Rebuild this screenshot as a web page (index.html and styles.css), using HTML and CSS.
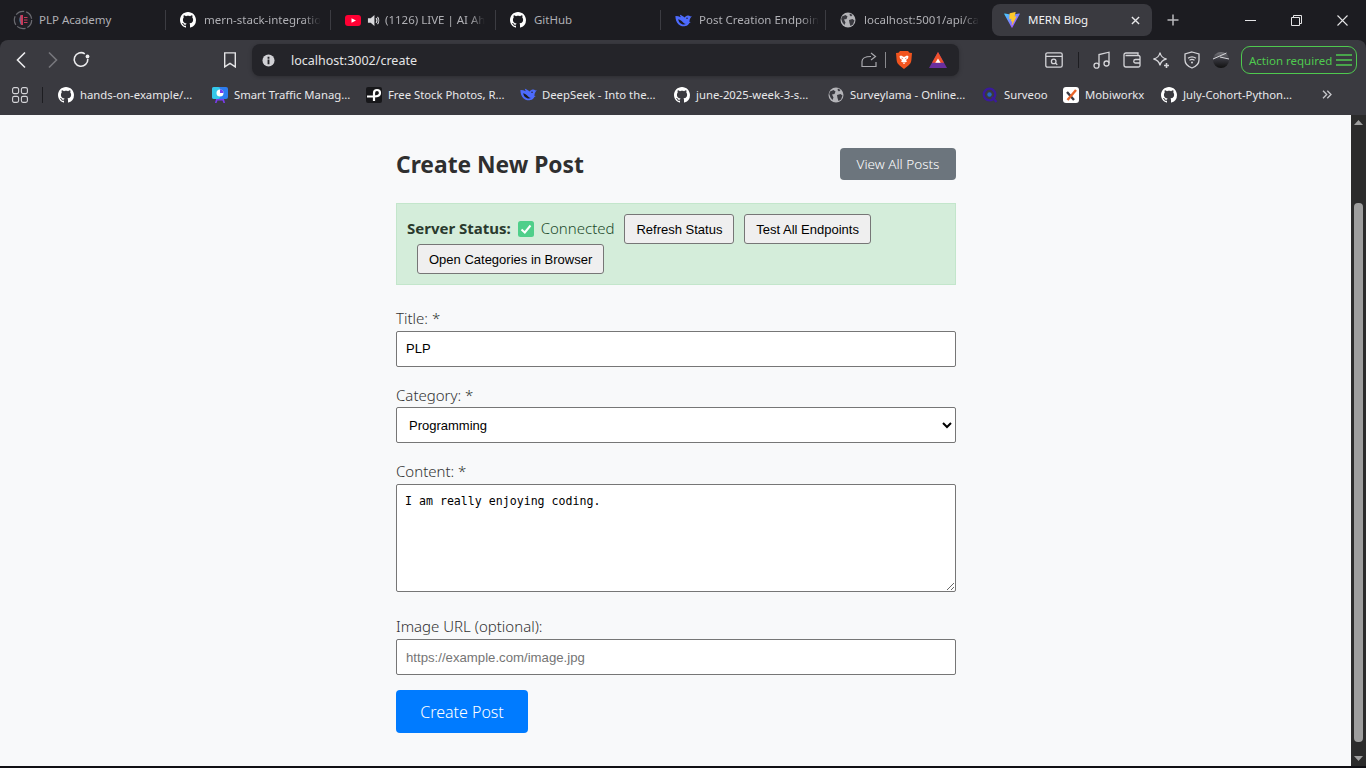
FILE: index.html
```html
<!DOCTYPE html>
<html lang="en">
<head>
<meta charset="utf-8">
<title>MERN Blog</title>
<link rel="stylesheet" href="styles.css">
</head>
<body>
<svg class="defs" width="0" height="0" aria-hidden="true">
  <defs>
    <symbol id="gh" viewBox="0 0 16 16"><path fill="currentColor" d="M8 0C3.58 0 0 3.58 0 8c0 3.54 2.29 6.53 5.47 7.59.4.07.55-.17.55-.38 0-.19-.01-.82-.01-1.49-2.01.37-2.53-.49-2.69-.94-.09-.23-.48-.94-.82-1.13-.28-.15-.68-.52-.01-.53.63-.01 1.08.58 1.23.82.72 1.21 1.87.87 2.33.66.07-.52.28-.87.51-1.07-1.78-.2-3.64-.89-3.64-3.95 0-.87.31-1.59.82-2.15-.08-.2-.36-1.02.08-2.12 0 0 .67-.21 2.2.82.64-.18 1.32-.27 2-.27s1.36.09 2 .27c1.53-1.04 2.2-.82 2.2-.82.44 1.1.16 1.92.08 2.12.51.56.82 1.27.82 2.15 0 3.07-1.87 3.75-3.65 3.95.29.25.54.73.54 1.48 0 1.07-.01 1.93-.01 2.2 0 .21.15.46.55.38A8.01 8.01 0 0 0 16 8c0-4.42-3.58-8-8-8z"/></symbol>
    <symbol id="globe" viewBox="0 0 16 16"><circle cx="8" cy="8" r="7.500" fill="#b4b4b8"/><path fill="#3a3a40" d="M2 4.500 5.500 3 7.500 4.500 6.500 7 4 7.500 5.500 10.500 4.500 13 2.500 10.500 1.200 7zM9 8l3.500-1 2 1.500-1.500 4L10.500 14 9.500 11zM10 1.500 12.500 3 11 4.500 9.500 3z"/></symbol>
    <symbol id="whale" viewBox="0 0 18 14"><path fill="#4d6bfe" d="M17.700 2.200c-.4-.5-.9.200-1.300.5-.8-.8-1.800-1.100-2.800-1-1.500.1-2.700 1-3.300 2.200C9.400 3 8.200 2.400 7.400 1.900 6.600 1.400 5.800 1 5 .9c.4.900.7 1.800 1 2.600C4.200 2.500 2.200 2 .3 2.100c0 3.300.9 6.600 3.200 8.900 1.700 1.800 4.700 2.700 7.600 2 2-.4 3.500-1.700 4.200-3.300.7-.2 1.300-.6 1.600-1.300-.8.300-1.300.2-1.500 0 .1-1.500.2-2.800 1.300-4.400.2-.3.7-.7 1-1.800z"/><path fill="#1c1c21" d="M3.300 5.700c2 .4 4.200 2.200 5.300 3.500 1 1.300 2.400 1.800 3.500 1.400-2 1.500-5.300.8-6.800-.8-1.100-1.200-1.800-2.800-2-4.100z"/><circle cx="12.800" cy="4.700" r=".8" fill="#1c1c21"/></symbol>
  </defs>
</svg>

<header class="browser">
  <div class="tabstrip">
    <div class="tab tab-first">
      <svg class="fav fav-plp" viewBox="0 0 20 20"><circle cx="10" cy="10" r="8.700" fill="#1f1f26" stroke="#6a6a70" stroke-width="1.200" stroke-dasharray="9 2"/><path fill="#c93a5a" d="M7.500 5h2.500v10H8C6.500 12 6 8 7.500 5z"/><path fill="#2a8fa8" d="M8 5c-1 3-1 7 .5 10L7 13C6 10 6.500 7 8 5z"/><path stroke="#c93a5a" stroke-width="1" d="M11 7.500h3.500M11 10h3.500M11 12.500h3.500"/></svg>
      <span class="tab-label">PLP Academy</span>
    </div>
    <div class="tab">
      <svg class="fav"><use href="#gh"/></svg>
      <span class="tab-label tab-fade">mern-stack-integratio</span>
    </div>
    <div class="tab">
      <svg class="fav-yt" viewBox="0 0 16 11"><rect width="16" height="11" rx="3" fill="#ff0033"/><path fill="#fff" d="M6.500 3.200 11 5.500 6.500 7.800z"/></svg>
      <svg class="fav-sound" viewBox="0 0 14 14"><path fill="#d8d8dc" d="M1 4.500h3L8 1v12L4 9.500H1z"/><path fill="none" stroke="#d8d8dc" stroke-width="1.200" d="M9.800 4.500c1 1.300 1 3.700 0 5M11.300 3c1.800 2.200 1.800 5.800 0 8"/></svg>
      <span class="tab-label tab-fade">(1126) LIVE | AI Ah</span>
    </div>
    <div class="tab">
      <svg class="fav"><use href="#gh"/></svg>
      <span class="tab-label">GitHub</span>
    </div>
    <div class="tab">
      <svg class="fav-whale"><use href="#whale"/></svg>
      <span class="tab-label tab-fade">Post Creation Endpoin</span>
    </div>
    <div class="tab tab-last">
      <svg class="fav fav-globe"><use href="#globe"/></svg>
      <span class="tab-label tab-fade">localhost:5001/api/ca</span>
    </div>
    <div class="tab-active">
      <svg class="fav" viewBox="0 0 16 16"><defs><linearGradient id="vl" x1="0" y1="0" x2="1" y2="1"><stop offset="0" stop-color="#41d1ff"/><stop offset="1" stop-color="#bd34fe"/></linearGradient></defs><path fill="url(#vl)" d="M15.800 2 8.400 15.400c-.2.300-.6.300-.8 0L.2 2c-.2-.3.100-.7.500-.6L8 2.700l7.300-1.300c.4-.1.700.3.500.6z"/><path fill="#ffc82a" d="M11.300.1 5.800 1.200c-.1 0-.2.100-.2.200L5.300 7c0 .1.100.2.300.2l1.500-.4c.2 0 .3.100.3.300l-.5 2.200c0 .200.100.300.300.200l.9-.3c.200 0 .300.100.300.300l-.7 3.400c0 .200.300.300.400.100l.1-.100 4.400-8.400c.1-.2 0-.3-.2-.3l-1.500.3c-.2 0-.3-.1-.3-.3L11.600.4c.1-.2-.1-.3-.3-.3z"/></svg>
      <span class="active-label">MERN Blog</span>
      <svg class="tab-x" viewBox="0 0 10 10"><path stroke="#e8e8ea" stroke-width="1.500" d="M1 1l8 8M9 1 1 9"/></svg>
    </div>
    <svg class="new-tab" viewBox="0 0 12 12"><path stroke="#b9b9bd" stroke-width="1.500" d="M6 .5v11M.5 6h11"/></svg>
    <div class="win-controls">
      <svg class="win-min" viewBox="0 0 11 11"><path stroke="#e4e4e6" d="M0 5.500h11"/></svg>
      <svg class="win-max" viewBox="0 0 11 11"><path fill="none" stroke="#e4e4e6" d="M.5 2.500h8v8h-8zM2.500 2.500V.5h8v8h-2"/></svg>
      <svg class="win-close" viewBox="0 0 11 11"><path stroke="#e4e4e6" stroke-width="1.100" d="M.5.500l10 10M10.500.500l-10 10"/></svg>
    </div>
  </div>

  <div class="toolbar">
    <div class="nav-group">
      <svg class="tb-ico" viewBox="0 0 20 20"><path fill="none" stroke="#ececee" stroke-width="1.600" d="M13 2.500 5.500 10l7.500 7.500"/></svg>
      <svg class="tb-ico" viewBox="0 0 20 20"><path fill="none" stroke="#77777c" stroke-width="1.600" d="M7 2.500 14.500 10 7 17.500"/></svg>
      <svg class="tb-ico" viewBox="0 0 20 20"><path fill="none" stroke="#ececee" stroke-width="1.600" d="M15.800 9a6.800 6.800 0 1 1-3-5.200"/><circle cx="15.500" cy="6.500" r="1.900" fill="#ececee"/></svg>
    </div>
    <svg class="bookmark" viewBox="0 0 14 16"><path fill="none" stroke="#e4e4e6" stroke-width="1.400" d="M1.700.9h10.600v14L7 11.300l-5.300 3.600z"/></svg>
    <div class="omnibox">
      <svg class="info" viewBox="0 0 14 14"><circle cx="7" cy="7" r="6.500" fill="#d0d0d4"/><path fill="#242429" d="M6 6h2v5H6zM6 3h2v2H6z"/></svg>
      <span class="url">localhost:3002/create</span>
      <svg class="share" viewBox="0 0 16 16"><path fill="none" stroke="#a9a9ae" stroke-width="1.200" d="M15 10v4.500H1v-5c0-3 3-5 9-5M10 1l4.500 3.500L10 8"/></svg>
      <span class="omni-sep"></span>
      <svg class="shield" viewBox="0 0 16 18"><path fill="#f1541e" d="M4 0h8l1.500 1.700L16 2l-.6 7c-.3 2.500-1.200 4-3 5.500L8 18l-4.400-3.500C1.800 13 .9 11.500.6 9L0 2l2.500-.3z"/><path fill="#fff" d="M8 6 5 4.500l-1.500.8.500 2.200 2 1.500-1 1.500 2 1 .5 1.500h1l.5-1.500 2-1-1-1.500 2-1.500.5-2.200-1.500-.8z"/><path fill="#f1541e" d="M5.500 6.500 7 7.500 6 8zM10.500 6.500 9 7.500 10 8zM7 11h2L8 12z"/></svg>
      <svg class="triangle" viewBox="0 0 18 16"><path fill="#6a2f9e" d="M9 0l9 16H0z"/><path fill="#f0512a" d="M9 0l6 10.800H3z"/><path fill="#fff" d="M9 6.500l2.700 4.300H6.300z"/></svg>
    </div>
    <div class="tb-right">
      <svg class="ext-ico" viewBox="0 0 18 16"><path fill="none" stroke="#d4d4d8" stroke-width="1.300" d="M2.500.8h13c1 0 1.700.7 1.700 1.700v11c0 1-.7 1.700-1.700 1.700h-13c-1 0-1.700-.7-1.700-1.700v-11C.8 1.500 1.500.8 2.500.8zM1 4.300h16"/><circle cx="8.700" cy="9.400" r="2.300" fill="none" stroke="#d4d4d8" stroke-width="1.300"/><path stroke="#d4d4d8" stroke-width="1.300" d="M10.300 11l2 1.800"/></svg>
      <span class="tb-sep"></span>
      <svg class="ext-ico ext-music" viewBox="0 0 18 18"><path fill="none" stroke="#d4d4d8" stroke-width="1.300" d="M6 14.500V3.500L16 1.200v11"/><circle cx="3.500" cy="14.700" r="2.500" fill="none" stroke="#d4d4d8" stroke-width="1.300"/><circle cx="13.500" cy="12.500" r="2.500" fill="none" stroke="#d4d4d8" stroke-width="1.300"/></svg>
      <svg class="ext-ico ext-wallet" viewBox="0 0 18 16"><path fill="none" stroke="#d4d4d8" stroke-width="1.300" d="M15 3.500V1H3C1.800 1 1 1.800 1 3v10c0 1.200.8 2 2 2h12.500c.8 0 1.500-.7 1.500-1.500v-8.500c0-.8-.7-1.500-1.500-1.500H2.500M17 7.500h-4.500a1.500 1.500 0 0 0 0 3.500H17"/></svg>
      <svg class="ext-ico ext-star" viewBox="0 0 18 18"><path fill="none" stroke="#d4d4d8" stroke-width="1.300" d="M8 1.500c.7 3.700 2.600 5.600 6.500 6.500-3.900.9-5.800 2.800-6.500 6.500C7.300 10.800 5.400 8.900 1.500 8c3.900-.9 5.800-2.800 6.500-6.500z"/><path stroke="#d4d4d8" stroke-width="1.600" d="M14.500 12v5M12 14.500h5"/></svg>
      <svg class="ext-ico ext-shield" viewBox="0 0 16 18"><path fill="none" stroke="#d4d4d8" stroke-width="1.300" d="M8 1l7 2v6c0 4-3 6.500-7 8-4-1.500-7-4-7-8V3z"/><path fill="none" stroke="#d4d4d8" stroke-width="1.200" d="M4 7.300c2.400-1.700 5.600-1.700 8 0M5.500 9.300c1.500-1 3.500-1 5 0"/><circle cx="8" cy="11.400" r="1" fill="#d4d4d8"/></svg>
      <svg class="ext-ico ext-ball" viewBox="0 0 18 18"><defs><linearGradient id="bl" x1="0" y1="0" x2="0" y2="1"><stop offset="0" stop-color="#77777c"/><stop offset=".5" stop-color="#33333a"/><stop offset="1" stop-color="#111"/></linearGradient></defs><circle cx="9" cy="9" r="8" fill="url(#bl)"/><path stroke="#d8d8dc" stroke-width="1" d="M1 8 14.500 2M8 6l9 2"/></svg>
      <div class="action">
        <span>Action required</span>
        <svg class="action-menu" viewBox="0 0 16 12"><path stroke="#4fc94f" stroke-width="1.600" d="M0 1h16M0 6h16M0 11h16"/></svg>
      </div>
    </div>
  </div>

  <nav class="bookmarks">
    <svg class="apps" viewBox="0 0 16 16"><g fill="none" stroke="#d4d4d8" stroke-width="1.100"><rect x=".6" y=".6" width="6" height="6" rx="1.600"/><rect x="9.400" y=".6" width="6" height="6" rx="1.600"/><rect x=".6" y="9.400" width="6" height="6" rx="1.600"/><rect x="9.400" y="9.400" width="6" height="6" rx="1.600"/></g></svg>
    <span class="bm-sep"></span>
    <a class="bm"><svg class="fav"><use href="#gh"/></svg>hands-on-example/...</a>
    <a class="bm"><svg class="fav" viewBox="0 0 16 16"><rect width="16" height="12" rx="2" fill="#2d7df0"/><rect width="8" height="12" rx="2" fill="#34c8e8"/><circle cx="8" cy="6" r="3.500" fill="#fff"/><path fill="#7a3cf0" d="M8 6V2.500A3.500 3.500 0 0 1 11.500 6zM4 12h8l1 4h-1.500l-1-2.500h-5L4.500 16H3z"/></svg>Smart Traffic Manag...</a>
    <a class="bm"><svg class="fav" viewBox="0 0 16 16"><rect width="16" height="16" rx="2" fill="#17171a"/><path fill="none" stroke="#fff" stroke-width="2.200" d="M1 9.500h7M8 14V6a3 3 0 0 1 6 0c0 2-1.300 3.500-6 3.500"/></svg>Free Stock Photos, R...</a>
    <a class="bm"><svg class="fav-whale"><use href="#whale"/></svg>DeepSeek - Into the...</a>
    <a class="bm"><svg class="fav"><use href="#gh"/></svg>june-2025-week-3-s...</a>
    <a class="bm"><svg class="fav"><use href="#globe"/></svg>Surveylama - Online...</a>
    <a class="bm bm-surveoo"><svg class="fav" viewBox="0 0 16 16"><circle cx="7.500" cy="7.500" r="5.800" fill="none" stroke="#3a1a9c" stroke-width="2.200"/><circle cx="7.500" cy="7.500" r="2.200" fill="#2466c8"/><path stroke="#3a1a9c" stroke-width="2.200" d="M10 10l4.500 5"/></svg>Surveoo</a>
    <a class="bm bm-mobi"><svg class="fav" viewBox="0 0 16 16"><rect width="16" height="16" rx="3" fill="#fff"/><path stroke="#3a3a44" stroke-width="2.400" d="M4 5l7 8"/><path stroke="#e8642a" stroke-width="2.400" d="M13 3 4.500 13"/></svg>Mobiworkx</a>
    <a class="bm bm-july"><svg class="fav"><use href="#gh"/></svg>July-Cohort-Python...</a>
    <svg class="more" viewBox="0 0 10 9"><path fill="none" stroke="#c8c8cc" stroke-width="1.300" d="M1 .7 4.700 4.500 1 8.300M5.300.7 9 4.500 5.300 8.300"/></svg>
  </nav>
</header>

<div class="viewport">
  <main class="page">
    <div class="page-head">
      <h1>Create New Post</h1>
      <a class="btn-secondary">View All Posts</a>
    </div>

    <div class="status">
      <strong>Server Status:</strong>
      <svg class="check" viewBox="0 0 16 16"><rect width="16" height="16" rx="2.500" fill="#4fcf8a"/><path fill="none" stroke="#fff" stroke-width="2" d="M3.500 8.500 6.800 11.500 12.500 4.500"/></svg>
      <span class="status-text">Connected</span>
      <button class="status-btn" type="button">Refresh Status</button>
      <button class="status-btn" type="button">Test All Endpoints</button>
      <button class="status-btn" type="button">Open Categories in Browser</button>
    </div>

    <form class="post-form">
      <div class="field">
        <label for="t">Title: *</label>
        <input id="t" type="text" value="PLP">
      </div>
      <div class="field">
        <label for="c">Category: *</label>
        <select id="c"><option>Programming</option></select>
      </div>
      <div class="field field-content">
        <label for="b">Content: *</label>
        <textarea id="b" rows="6">I am really enjoying coding.</textarea>
      </div>
      <div class="field field-url">
        <label for="u">Image URL (optional):</label>
        <input id="u" type="text" placeholder="https://example.com/image.jpg">
      </div>
      <button class="btn-primary" type="button">Create Post</button>
    </form>
  </main>
  <div class="scrollbar">
    <svg class="sb-arrow" viewBox="0 0 9 6"><path fill="#9e9e9e" d="M4.500 1 9 6H0z"/></svg>
    <div class="sb-track"><div class="sb-thumb"></div></div>
    <svg class="sb-arrow" viewBox="0 0 9 6"><path fill="#9e9e9e" d="M0 0h9L4.500 5z"/></svg>
  </div>
</div>
<div class="taskbar-edge"></div>
</body>
</html>
```
FILE: styles.css
```css
* { box-sizing: border-box; }
html, body { margin: 0; height: 100%; overflow: hidden; }
body {
  background: #1c1c21;
  font-family: "Noto Sans", "Open Sans", sans-serif;
  display: flex;
  flex-direction: column;
  width: 1366px;
  height: 768px;
}
.defs { position: absolute; }

/* browser chrome */
.browser { flex: none; height: 115px; display: flex; flex-direction: column; background: #1c1c21; }
.tabstrip { height: 40px; display: flex; align-items: center; padding-left: 1px; }
.tab {
  width: 165px;
  height: 20px;
  flex: none;
  display: flex;
  align-items: center;
  gap: 8px;
  padding-left: 14px;
  border-right: 1px solid #3c3c42;
  color: #b0b0b5;
}
.tab-first { padding-left: 12px; }
.tab-last { border-right: 0; width: 166px; }
.tab-label {
  font-size: 11.500px;
  padding-bottom: 2px;
  white-space: nowrap;
}
.tab-fade {
  -webkit-mask-image: linear-gradient(90deg, #000 85%, transparent);
  mask-image: linear-gradient(90deg, #000 85%, transparent);
}
.fav { width: 16px; height: 16px; flex: none; color: #fff; }
.fav-plp { width: 20px; height: 20px; margin-right: -2px; }
.fav-yt { width: 16px; height: 11px; flex: none; }
.fav-sound { width: 13px; height: 13px; flex: none; margin: 0 -3px 0 -2px; }
.fav-whale { width: 17px; height: 13px; flex: none; margin-right: -1px; }
.fav-globe { color: #b4b4b8; }
.tab-active {
  width: 160px;
  height: 32px;
  flex: none;
  display: flex;
  align-items: center;
  padding: 0 12px;
  border-radius: 8px;
  background: #3a3a40;
  color: #f2f2f4;
}
.active-label { font-size: 11.500px; margin-left: 8px; padding-bottom: 2px; flex: 1; }
.tab-x { width: 9px; height: 9px; }
.new-tab { width: 12px; height: 12px; margin-left: 15px; }
.win-controls { margin-left: auto; display: flex; align-items: center; padding-right: 18px; gap: 35px; }
.win-min, .win-max, .win-close { width: 11px; height: 11px; }

.toolbar {
  height: 40px;
  background: #3a3a40;
  border-radius: 8px 8px 0 0;
  display: flex;
  align-items: center;
  padding-left: 12px;
}
.nav-group { display: flex; gap: 10px; }
.tb-ico { width: 20px; height: 20px; }
.bookmark { width: 14px; height: 16px; margin-left: 131px; }
.omnibox {
  width: 707px;
  height: 32px;
  margin-left: 15px;
  border-radius: 8px;
  background: #242429;
  box-shadow: 0 1px 4px rgba(0, 0, 0, .25);
  display: flex;
  align-items: center;
  padding-left: 10px;
}
.info { width: 13px; height: 13px; }
.url { font-size: 12.500px; color: #e4e4e6; margin-left: 16px; flex: 1; }
.share { width: 16px; height: 16px; }
.omni-sep { width: 1px; height: 16px; background: #8a8a8e; margin-left: 8px; }
.shield { width: 16px; height: 18px; margin-left: 10px; }
.triangle { width: 18px; height: 16px; margin-left: 17px; margin-right: 12px; }
.tb-right { display: flex; align-items: center; margin-left: 86px; }
.ext-ico { width: 18px; height: 16px; flex: none; }
.tb-sep { width: 1px; height: 16px; background: #1d1d21; margin: 0 14px 0 15px; }
.ext-music { height: 18px; }
.ext-wallet { margin-left: 12px; }
.ext-star { height: 18px; margin-left: 11px; }
.ext-shield { height: 18px; margin-left: 13px; }
.ext-ball { height: 18px; margin-left: 11px; }
.action {
  width: 116px;
  height: 28px;
  margin-left: 11px;
  border: 1px solid #4fc94f;
  border-radius: 9px;
  display: flex;
  align-items: center;
  justify-content: space-between;
  padding: 0 4px 0 7px;
  font-size: 11.500px;
  color: #4fc94f;
  white-space: nowrap;
}
.action-menu { width: 16px; height: 12px; flex: none; }

.bookmarks {
  height: 35px;
  background: #3a3a40;
  display: flex;
  align-items: center;
  padding: 0 0 6px 12px;
}
.apps { width: 16px; height: 16px; flex: none; }
.bm-sep { width: 1px; height: 16px; background: #1d1d21; margin: 0 15px 0 14px; }
.bm {
  width: 154px;
  display: flex;
  align-items: center;
  gap: 6px;
  font-size: 11.300px;
  color: #e8e8ea;
  white-space: nowrap;
  flex: none;
}
.bm-surveoo { width: 81px; }
.bm-mobi { width: 98px; }
.bm-july { width: auto; }
.more { width: 10px; height: 9px; margin-left: 30px; flex: none; }

/* page */
.viewport { flex: 1; display: flex; min-height: 0; background: #f8f9fa; }
.page {
  flex: 1;
  padding: 33px 0 0 396px;
  overflow: hidden;
  color: #333;
}
.page-head {
  width: 560px;
  display: flex;
  justify-content: space-between;
  align-items: flex-start;
  margin-bottom: 21px;
}
h1 { margin: 0; font-size: 22.800px; line-height: 34px; font-weight: 700; color: #2f2f2f; }
.btn-secondary {
  width: 116px;
  height: 32px;
  display: flex;
  align-items: center;
  justify-content: center;
  background: #6c757d;
  border-radius: 4px;
  font-size: 13.500px;
  font-weight: 300;
  color: #fff;
}
.status {
  width: 560px;
  height: 82px;
  padding: 10px;
  background: #d4edda;
  border: 1px solid #c3e6cb;
  font-size: 15px;
  line-height: 28px;
  color: #333;
  margin-bottom: 23px;
}
.status strong { color: #2a3a2e; }
.status-text { font-weight: 300; color: #1d4a2b; }
.check { width: 16px; height: 16px; vertical-align: -3px; margin: 0 3px; }
.status-btn {
  height: 30px;
  padding: 1px 11px;
  margin-left: 6px;
  font: 13px "Liberation Sans", Arial, sans-serif;
  color: #000;
  background: #efefef;
  border: 1px solid #767676;
  border-radius: 3px;
  vertical-align: top;
}
.status-btn:last-child { margin-left: 10px; }

.post-form { width: 560px; }
.field { margin-bottom: 18px; }
.field label {
  display: block;
  font-size: 15px;
  font-weight: 300;
  line-height: 20.500px;
  margin-bottom: 2px;
  color: #333;
}
.field input, .field select, .field textarea {
  display: block;
  width: 100%;
  height: 36px;
  padding: 0 9px;
  background: #fff;
  border: 1px solid #767676;
  border-radius: 2px;
  color: #000;
  font: 13px "Liberation Sans", Arial, sans-serif;
}
.field input::placeholder { color: #757575; font-size: 13.200px; }
.field select { padding-left: 8px; }
.field textarea {
  height: 108px;
  padding: 9px 8px;
  font: 11.600px "DejaVu Sans Mono", monospace;
  resize: vertical;
}
.field-content { margin-bottom: 24px; }
.field-url { margin-bottom: 15px; }
.field-url label { margin-bottom: 3px; }
.btn-primary {
  display: block;
  width: 132px;
  height: 43px;
  background: #007bff;
  border: 0;
  border-radius: 4px;
  font-family: "Noto Sans", sans-serif;
  font-size: 16px;
  font-weight: 300;
  color: #fff;
}

/* scrollbar */
.scrollbar { width: 15px; flex: none; background: #2b2b2b; display: flex; flex-direction: column; align-items: center; padding: 4px 0; }
.sb-arrow { width: 9px; height: 6px; flex: none; }
.sb-track { flex: 1; width: 9px; padding-top: 78px; padding-bottom: 14px; display: flex; }
.sb-thumb { width: 9px; flex: 1; background: #9e9e9e; border-radius: 4px; }
.taskbar-edge { height: 2px; flex: none; background: #101014; }
```
